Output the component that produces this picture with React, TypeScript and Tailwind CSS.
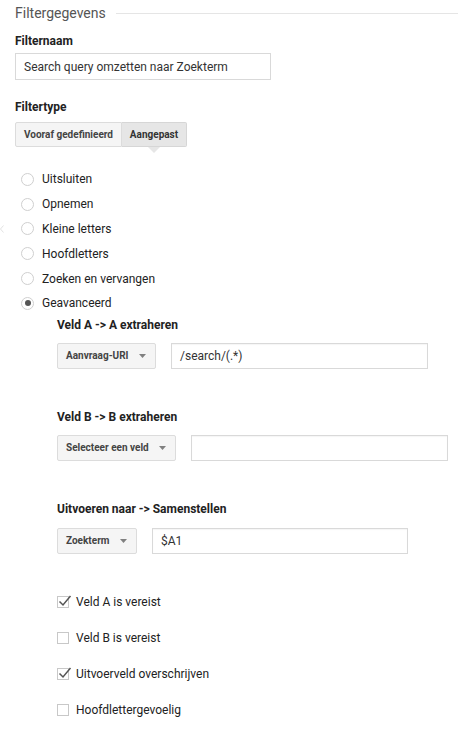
import React from "react";

function Caret() {
  return (
    <svg width="7" height="4" viewBox="0 0 7 4" className="shrink-0">
      <path d="M0 0 L7 0 L3.5 4 Z" fill="#808080" />
    </svg>
  );
}

function Radio({ label, checked }: { label: string; checked?: boolean }) {
  return (
    <div className="flex h-[24.8px] items-center">
      <div className="ml-[6px] flex h-[13px] w-[13px] items-center justify-center rounded-full border border-[#cfcfcf] bg-white">
        {checked && <div className="h-[6px] w-[6px] rounded-full bg-[#555]" />}
      </div>
      <span className="ml-[8px] text-[12px] text-[#222]">{label}</span>
    </div>
  );
}

function Checkbox({ label, checked }: { label: string; checked?: boolean }) {
  return (
    <div className="flex h-[20px] items-center">
      <div className="relative h-[12px] w-[12px] border border-[#c8c8c8] bg-white">
        {checked && (
          <svg
            width="14"
            height="13"
            viewBox="0 0 14 13"
            className="absolute left-[0px] top-[-3px]"
          >
            <path d="M1.5 7.5 L5 11 L12.5 2" stroke="#555" strokeWidth="1.5" fill="none" />
          </svg>
        )}
      </div>
      <span className="ml-[7px] text-[12px] text-[#222]">{label}</span>
    </div>
  );
}

function SelectBtn({ label, width }: { label: string; width: string }) {
  return (
    <div
      className={`flex h-[26px] items-center justify-between rounded-[2px] border border-[#dcdcdc] bg-[#f5f5f5] pl-[8px] pr-[9px] ${width}`}
    >
      <span className="text-[10px] font-bold text-[#444]">{label}</span>
      <Caret />
    </div>
  );
}

function TextBox({ value, width }: { value: string; width: string }) {
  return (
    <div
      className={`flex h-[26px] items-center border border-[#d9d9d9] bg-white px-[8px] text-[12px] text-[#333] shadow-[inset_0_1px_1px_rgba(0,0,0,0.04)] ${width}`}
    >
      {value}
    </div>
  );
}

function Label({ children, className = "" }: { children: React.ReactNode; className?: string }) {
  return (
    <div className={`h-[16px] text-[12px] font-bold leading-[16px] text-[#222] ${className}`}>
      {children}
    </div>
  );
}

export default function App() {
  return (
    <div
      className="relative h-[730px] w-[458px] overflow-hidden bg-white"
      style={{ fontFamily: "Roboto, 'Liberation Sans', Arial, sans-serif" }}
    >
      <div className="pl-[15px]">
        <div className="mt-[4px] flex h-[18px] items-center">
          <span className="text-[14px] leading-[18px] text-[#555]">Filtergegevens</span>
          <div className="ml-[10px] h-px flex-1 bg-[#e5e5e5]" />
        </div>

        <Label className="mt-[11px]">Filternaam</Label>
        <div className="mt-[4px] flex h-[27px] w-[256px] items-center border border-[#d9d9d9] bg-white px-[8px] text-[12px] text-[#333]">
          Search query omzetten naar Zoekterm
        </div>

        <Label className="mt-[19px]">Filtertype</Label>
        <div className="mt-[7px] flex h-[25px] w-[172px]">
          <div className="flex w-[107px] items-center justify-center rounded-l-[2px] border border-[#dcdcdc] bg-[#f5f5f5] text-[10px] font-bold text-[#444]">
            Vooraf gedefinieerd
          </div>
          <div className="relative flex flex-1 items-center justify-center rounded-r-[2px] border border-l-0 border-[#d6d6d6] bg-[#e6e6e6] text-[10px] font-bold text-[#333]">
            Aangepast
            <div className="absolute bottom-[-7px] left-1/2 h-0 w-0 -translate-x-1/2 border-x-[6px] border-t-[6px] border-x-transparent border-t-[#e6e6e6]" />
          </div>
        </div>

        <div className="mt-[20px]">
          <Radio label="Uitsluiten" />
          <Radio label="Opnemen" />
          <Radio label="Kleine letters" />
          <Radio label="Hoofdletters" />
          <Radio label="Zoeken en vervangen" />
          <Radio label="Geavanceerd" checked />
        </div>

        <div className="pl-[42px]">
          <Label className="mt-[1px]">Veld A -&gt; A extraheren</Label>
          <div className="mt-[10px] flex gap-[15px]">
            <SelectBtn label="Aanvraag-URI" width="w-[99px]" />
            <TextBox value="/search/(.*)" width="w-[257px]" />
          </div>

          <Label className="mt-[40px]">Veld B -&gt; B extraheren</Label>
          <div className="mt-[10px] flex gap-[15px]">
            <SelectBtn label="Selecteer een veld" width="w-[119px]" />
            <TextBox value="" width="w-[257px]" />
          </div>

          <Label className="mt-[40px]">Uitvoeren naar -&gt; Samenstellen</Label>
          <div className="mt-[11px] flex gap-[15px]">
            <SelectBtn label="Zoekterm" width="w-[80px]" />
            <TextBox value="$A1" width="w-[256px]" />
          </div>

          <div className="mt-[38px] flex flex-col gap-[16px]">
            <Checkbox label="Veld A is vereist" checked />
            <Checkbox label="Veld B is vereist" />
            <Checkbox label="Uitvoerveld overschrijven" checked />
            <Checkbox label="Hoofdlettergevoelig" />
          </div>
        </div>
      </div>

      <svg width="4" height="8" viewBox="0 0 4 8" className="absolute left-0 top-[225px]">
        <path d="M3.5 0.5 L0.5 4 L3.5 7.5" stroke="#e2e2e2" strokeWidth="1" fill="none" />
      </svg>
    </div>
  );
}
